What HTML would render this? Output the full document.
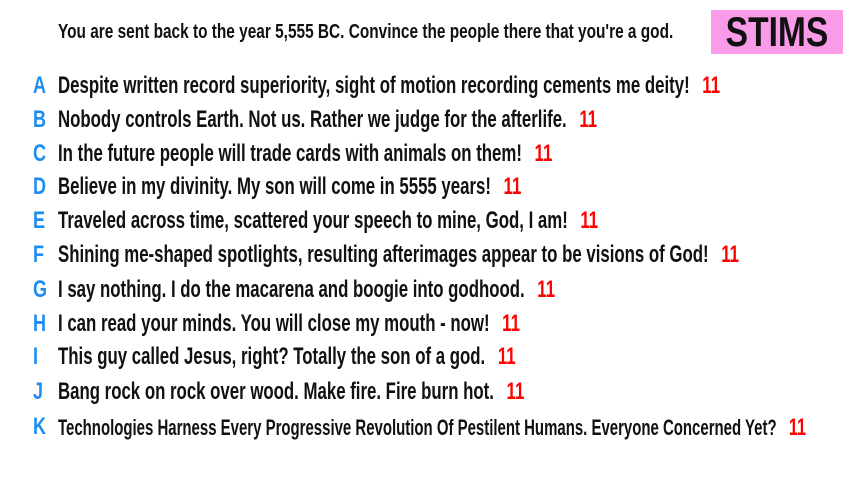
<!DOCTYPE html>
<html><head><meta charset="utf-8"><style>
body{margin:0;width:853px;height:480px;background:#fff;overflow:hidden;position:relative;font-family:"Liberation Sans Narrow","Liberation Sans",sans-serif;}
.h{position:absolute;left:58px;top:21px;font-size:20px;font-weight:bold;color:#111;white-space:nowrap;transform:scaleX(0.77);transform-origin:left}
.box{position:absolute;left:711px;top:10px;width:132px;height:44px;background:#f99be8;}
.box span{position:absolute;left:0;right:0;top:0;text-align:center;font-size:42px;font-weight:bold;line-height:44px;color:#111;transform:scaleX(0.8)}
.r{position:absolute;left:0;height:30px;font-size:24px;font-weight:bold;white-space:nowrap;}
.l{position:absolute;left:33px;color:#1e8cf0;transform:scaleX(0.75);transform-origin:left}
.t{position:absolute;left:58px;color:#111;transform:scaleX(0.70);transform-origin:left}
.n{color:#f00;margin-left:18px}
</style></head><body>
<div class="h">You are sent back to the year 5,555 BC. Convince the people there that you're a god.</div>
<div class="box"><span>STIMS</span></div>
<div class="r" style="top:72px"><span class="l">A</span><span class="t">Despite written record superiority, sight of motion recording cements me deity!<span class="n">11</span></span></div>
<div class="r" style="top:106px"><span class="l">B</span><span class="t">Nobody controls Earth. Not us. Rather we judge for the afterlife.<span class="n">11</span></span></div>
<div class="r" style="top:140px"><span class="l">C</span><span class="t">In the future people will trade cards with animals on them!<span class="n">11</span></span></div>
<div class="r" style="top:173px"><span class="l">D</span><span class="t">Believe in my divinity. My son will come in 5555 years!<span class="n">11</span></span></div>
<div class="r" style="top:207px"><span class="l">E</span><span class="t">Traveled across time, scattered your speech to mine, God, I am!<span class="n">11</span></span></div>
<div class="r" style="top:241px"><span class="l">F</span><span class="t">Shining me-shaped spotlights, resulting afterimages appear to be visions of God!<span class="n">11</span></span></div>
<div class="r" style="top:276px"><span class="l">G</span><span class="t">I say nothing. I do the macarena and boogie into godhood.<span class="n">11</span></span></div>
<div class="r" style="top:310px"><span class="l">H</span><span class="t">I can read your minds. You will close my mouth - now!<span class="n">11</span></span></div>
<div class="r" style="top:343px"><span class="l">I</span><span class="t">This guy called Jesus, right? Totally the son of a god.<span class="n">11</span></span></div>
<div class="r" style="top:378px"><span class="l">J</span><span class="t">Bang rock on rock over wood. Make fire. Fire burn hot.<span class="n">11</span></span></div>
<div class="r" style="top:413px"><span class="l">K</span><span class="t" style="font-size:22px;top:1px;transform:scaleX(0.68)">Technologies Harness Every Progressive Revolution Of Pestilent Humans. Everyone Concerned Yet?<span class="n" style="font-size:24px">11</span></span></div>
</body></html>
